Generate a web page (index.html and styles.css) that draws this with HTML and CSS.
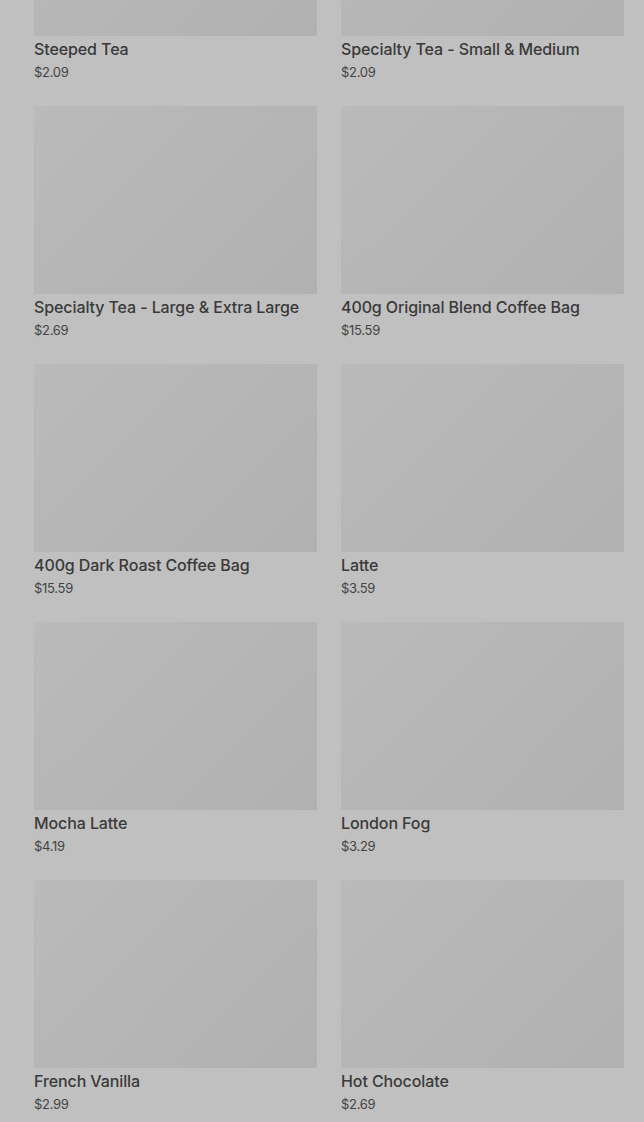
FILE: index.html
```html
<!DOCTYPE html>
<html>
<head>
	<meta charset="UTF-8">
	<title>Menu</title>
	<link rel="stylesheet" href="styles.css">
</head>
<body>
	<div class="product_list">
		<div class="item">
			<div class="pic"></div>
			<p class="name">Steeped Tea</p>
			<p class="price">$2.09</p>
		</div>
		<div class="item">
			<div class="pic"></div>
			<p class="name">Specialty Tea - Small &amp; Medium</p>
			<p class="price">$2.09</p>
		</div>
		<div class="item">
			<div class="pic"></div>
			<p class="name">Specialty Tea - Large &amp; Extra Large</p>
			<p class="price">$2.69</p>
		</div>
		<div class="item">
			<div class="pic"></div>
			<p class="name">400g Original Blend Coffee Bag</p>
			<p class="price">$15.59</p>
		</div>
		<div class="item">
			<div class="pic"></div>
			<p class="name">400g Dark Roast Coffee Bag</p>
			<p class="price">$15.59</p>
		</div>
		<div class="item">
			<div class="pic"></div>
			<p class="name">Latte</p>
			<p class="price">$3.59</p>
		</div>
		<div class="item">
			<div class="pic"></div>
			<p class="name">Mocha Latte</p>
			<p class="price">$4.19</p>
		</div>
		<div class="item">
			<div class="pic"></div>
			<p class="name">London Fog</p>
			<p class="price">$3.29</p>
		</div>
		<div class="item">
			<div class="pic"></div>
			<p class="name">French Vanilla</p>
			<p class="price">$2.99</p>
		</div>
		<div class="item">
			<div class="pic"></div>
			<p class="name">Hot Chocolate</p>
			<p class="price">$2.69</p>
		</div>
	</div>
</body>
</html>
```
FILE: styles.css
```css
* { margin: 0; padding: 0; }
html, body { background: #c0c0c0; overflow: hidden; }
body { font-family: Inter, "Noto Sans", sans-serif; color: #3a3a3a; }

.product_list { display: grid; grid-template-columns: 283px 283px; column-gap: 24px; row-gap: 24px; padding: 0 20px 40px 34px; margin-top: -152px; }
.item .pic { height: 188px; background: linear-gradient(135deg, #bababa 0%, #b1b1b1 100%); }
.item .name { margin-top: 2px; font-size: 16px; line-height: 22px; font-weight: 500; letter-spacing: -0.1px; }
.item .price { margin-top: 2px; font-size: 13px; line-height: 20px; color: #444; letter-spacing: -0.3px; }
```
